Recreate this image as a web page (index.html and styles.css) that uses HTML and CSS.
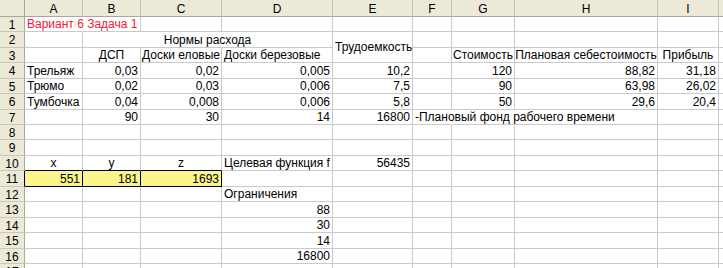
FILE: index.html
```html
<!DOCTYPE html>
<html lang="ru">
<head>
<meta charset="utf-8">
<title>Вариант 6 Задача 1</title>
<link rel="stylesheet" href="styles.css">
</head>
<body>
<div class="sheet">
  <!-- header row -->
  <div class="hd corner"></div>
  <div class="hd ch">A</div>
  <div class="hd ch">B</div>
  <div class="hd ch">C</div>
  <div class="hd ch">D</div>
  <div class="hd ch">E</div>
  <div class="hd ch">F</div>
  <div class="hd ch">G</div>
  <div class="hd ch">H</div>
  <div class="hd ch">I</div>
  <div class="hd ch last"></div>

  <!-- row 1 -->
  <div class="hd rh">1</div>
  <div class="c nr red">Вариант 6 Задача 1</div>
  <div class="c"></div><div class="c"></div><div class="c"></div><div class="c"></div>
  <div class="c"></div><div class="c"></div><div class="c"></div><div class="c"></div><div class="c j"></div>

  <!-- row 2 -->
  <div class="hd rh">2</div>
  <div class="c"></div>
  <div class="c ctr span3">Нормы расхода</div>
  <div class="c mid span2r">Трудоемкость</div>
  <div class="c"></div><div class="c"></div><div class="c"></div><div class="c"></div><div class="c j"></div>

  <!-- row 3 -->
  <div class="hd rh">3</div>
  <div class="c"></div>
  <div class="c ctr">ДСП</div>
  <div class="c ctr">Доски еловые</div>
  <div class="c">Доски березовые</div>
  <div class="c"></div>
  <div class="c ctr">Стоимость</div>
  <div class="c ctr">Плановая себестоимость</div>
  <div class="c ctr">Прибыль</div>
  <div class="c j"></div>

  <!-- row 4 -->
  <div class="hd rh">4</div>
  <div class="c">Трельяж</div>
  <div class="c r">0,03</div>
  <div class="c r">0,02</div>
  <div class="c r">0,005</div>
  <div class="c r">10,2</div>
  <div class="c"></div>
  <div class="c r">120</div>
  <div class="c r">88,82</div>
  <div class="c r">31,18</div>
  <div class="c j"></div>

  <!-- row 5 -->
  <div class="hd rh">5</div>
  <div class="c">Трюмо</div>
  <div class="c r">0,02</div>
  <div class="c r">0,03</div>
  <div class="c r">0,006</div>
  <div class="c r">7,5</div>
  <div class="c"></div>
  <div class="c r">90</div>
  <div class="c r">63,98</div>
  <div class="c r">26,02</div>
  <div class="c j"></div>

  <!-- row 6 -->
  <div class="hd rh">6</div>
  <div class="c">Тумбочка</div>
  <div class="c r">0,04</div>
  <div class="c r">0,008</div>
  <div class="c r">0,006</div>
  <div class="c r">5,8</div>
  <div class="c"></div>
  <div class="c r">50</div>
  <div class="c r">29,6</div>
  <div class="c r">20,4</div>
  <div class="c j"></div>

  <!-- row 7 -->
  <div class="hd rh">7</div>
  <div class="c"></div>
  <div class="c r">90</div>
  <div class="c r">30</div>
  <div class="c r">14</div>
  <div class="c r">16800</div>
  <div class="c nr">-Плановый фонд рабочего времени</div>
  <div class="c nr"></div>
  <div class="c"></div>
  <div class="c"></div>
  <div class="c j"></div>

  <!-- row 8 -->
  <div class="hd rh">8</div>
  <div class="c"></div><div class="c"></div><div class="c"></div><div class="c"></div><div class="c"></div>
  <div class="c"></div><div class="c"></div><div class="c"></div><div class="c"></div><div class="c j"></div>

  <!-- row 9 -->
  <div class="hd rh">9</div>
  <div class="c"></div><div class="c"></div><div class="c"></div><div class="c"></div><div class="c"></div>
  <div class="c"></div><div class="c"></div><div class="c"></div><div class="c"></div><div class="c j"></div>

  <!-- row 10 -->
  <div class="hd rh">10</div>
  <div class="c ctr bb">x</div>
  <div class="c ctr bb">y</div>
  <div class="c ctr bb">z</div>
  <div class="c">Целевая функция f</div>
  <div class="c r">56435</div>
  <div class="c"></div><div class="c"></div><div class="c"></div><div class="c"></div><div class="c j"></div>

  <!-- row 11 -->
  <div class="hd rh dark">11</div>
  <div class="c r yel">551</div>
  <div class="c r yel">181</div>
  <div class="c r yel">1693</div>
  <div class="c"></div><div class="c"></div>
  <div class="c"></div><div class="c"></div><div class="c"></div><div class="c"></div><div class="c j"></div>

  <!-- row 12 -->
  <div class="hd rh">12</div>
  <div class="c"></div><div class="c"></div><div class="c"></div>
  <div class="c">Ограничения</div>
  <div class="c"></div><div class="c"></div><div class="c"></div><div class="c"></div><div class="c"></div><div class="c j"></div>

  <!-- row 13 -->
  <div class="hd rh">13</div>
  <div class="c"></div><div class="c"></div><div class="c"></div>
  <div class="c r">88</div>
  <div class="c"></div><div class="c"></div><div class="c"></div><div class="c"></div><div class="c"></div><div class="c j"></div>

  <!-- row 14 -->
  <div class="hd rh">14</div>
  <div class="c"></div><div class="c"></div><div class="c"></div>
  <div class="c r">30</div>
  <div class="c"></div><div class="c"></div><div class="c"></div><div class="c"></div><div class="c"></div><div class="c j"></div>

  <!-- row 15 -->
  <div class="hd rh">15</div>
  <div class="c"></div><div class="c"></div><div class="c"></div>
  <div class="c r">14</div>
  <div class="c"></div><div class="c"></div><div class="c"></div><div class="c"></div><div class="c"></div><div class="c j"></div>

  <!-- row 16 -->
  <div class="hd rh">16</div>
  <div class="c"></div><div class="c"></div><div class="c"></div>
  <div class="c r">16800</div>
  <div class="c"></div><div class="c"></div><div class="c"></div><div class="c"></div><div class="c"></div><div class="c j"></div>

  <!-- row 17 (partially visible) -->
  <div class="hd rh">17</div>
  <div class="c"></div><div class="c"></div><div class="c"></div><div class="c"></div><div class="c"></div>
  <div class="c"></div><div class="c"></div><div class="c"></div><div class="c"></div><div class="c j"></div>
</div>
</body>
</html>
```
FILE: styles.css
```css
html, body {
  margin: 0;
  padding: 0;
  background: #ffffff;
}

.sheet {
  display: grid;
  grid-template-columns: 25px 58px 58px 81px 111px 80px 39px 63px 143px 61px 4px;
  grid-template-rows: 17px 15px 16px 15px 16px 15px 16px 15px 15px 16px 15px 16px 15px 16px 15px 16px 15px 16px;
  width: 723px;
  height: 268px;
  overflow: hidden;
  font-family: "Liberation Sans", Arial, sans-serif;
  font-size: 12px;
  color: #000000;
}

/* header cells */
.hd {
  box-sizing: border-box;
  background: #ece9d8;
  display: flex;
  align-items: center;
  justify-content: center;
  line-height: 14px;
  color: #000000;
  white-space: nowrap;
  overflow: hidden;
}

.corner {
  border-right: 1px solid #aca899;
  border-bottom: 1px solid #aca899;
}

.ch {
  border-right: 1px solid #c5c2b2;
  border-bottom: 1px solid #aca899;
  padding-top: 1px;
}

.ch.last {
  border-right: none;
}

.rh {
  border-right: 1px solid #aca899;
  border-bottom: 1px solid #cbc8b8;
  padding-top: 1px;
}

.rh.dark {
  border-right-color: #000000;
}

/* ordinary cells */
.c {
  box-sizing: border-box;
  border-right: 1px solid #cacaca;
  border-bottom: 1px solid #cacaca;
  display: flex;
  align-items: flex-end;
  justify-content: flex-start;
  padding: 0 2px 0 2px;
  line-height: 14px;
  white-space: nowrap;
  min-width: 0;
}

.c.j {
  border-right: none;
}

.r {
  justify-content: flex-end;
}

.ctr {
  justify-content: center;
}

.mid {
  align-items: center;
}

.nr {
  border-right-color: transparent;
}

.red {
  color: #ee1a3a;
}

.span3 {
  grid-column: span 3;
}

.span2r {
  grid-row: span 2;
}

.bb {
  border-bottom-color: #000000;
}

.yel {
  background: #faf68c;
  border-right-color: #000000;
  border-bottom-color: #000000;
}
```
